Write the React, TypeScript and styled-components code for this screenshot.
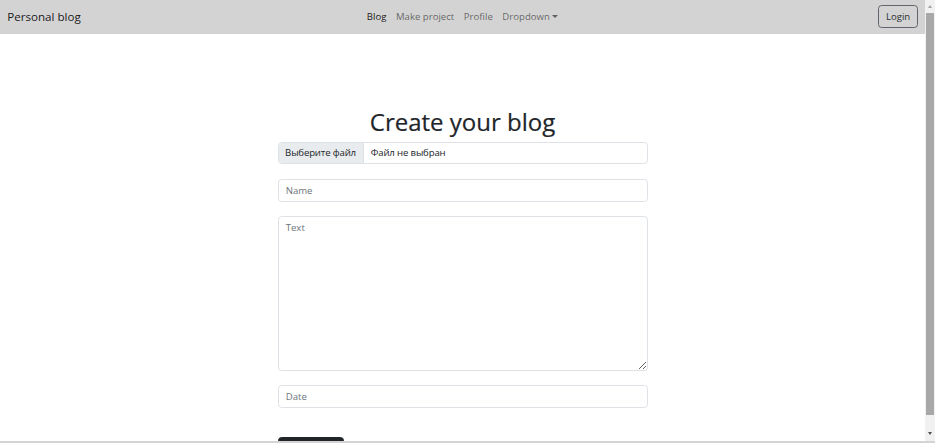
import { createGlobalStyle, styled } from "styled-components";

const GlobalStyle = createGlobalStyle`
	* {
		box-sizing: border-box;
	}

	html,
	body {
		margin: 0;
		height: 100%;
		overflow: hidden;
	}

	body {
		font-family: "Open Sans", "Noto Sans", "DejaVu Sans", sans-serif;
		color: #212529;
		background: #ffffff;
	}
`;

const Viewport = styled.div`
	display: flex;
	height: 100vh;
	border-bottom: 2px solid #d4d4d4;
`;

const Page = styled.div`
	flex: 1;
	min-width: 0;
	overflow: hidden;
`;

const Navbar = styled.nav`
	display: flex;
	align-items: center;
	justify-content: space-between;
	height: 33.6px;
	padding: 0 7.2px;
	background: #d3d3d3;
`;

const Brand = styled.a`
	flex: 1;
	font-size: 11.6px;
	color: rgba(0, 0, 0, 0.9);
	text-decoration: none;
	white-space: nowrap;
`;

const NavList = styled.ul`
	display: flex;
	margin: 0;
	padding: 0;
	list-style: none;
`;

const NavLink = styled.a<{ $active?: boolean }>`
	display: flex;
	align-items: center;
	padding: 4.8px;
	font-size: 9.6px;
	color: ${(p) => (p.$active ? "rgba(0, 0, 0, 0.9)" : "rgba(0, 0, 0, 0.55)")};
	text-decoration: none;
	white-space: nowrap;
`;

const Caret = styled.span`
	display: inline-block;
	margin-left: 2.4px;
	border-top: 3px solid currentColor;
	border-left: 3px solid transparent;
	border-right: 3px solid transparent;
`;

const NavEnd = styled.div`
	flex: 1;
	display: flex;
	justify-content: flex-end;
`;

const LoginButton = styled.button`
	height: 23px;
	padding: 0 6.6px;
	font-family: inherit;
	font-size: 9.6px;
	color: #2b2f33;
	background: transparent;
	border: 1px solid #5f656b;
	border-radius: 3.6px;
`;

const Main = styled.main`
	width: 370px;
	margin: 74.4px auto 0;
`;

const Title = styled.h1`
	margin: 0 0 4.8px;
	font-size: 24px;
	font-weight: 500;
	line-height: 1.2;
	text-align: center;
	-webkit-text-stroke: 0.2px currentColor;
`;

const Form = styled.form`
	display: flex;
	flex-direction: column;
	gap: 14.4px;
`;

const FileField = styled.label`
	display: flex;
	height: 22.8px;
	border: 1px solid #dee2e6;
	border-radius: 3.6px;
	overflow: hidden;
	font-size: 9.6px;
	letter-spacing: -0.15px;
`;

const FileButton = styled.span`
	display: flex;
	align-items: center;
	padding: 0 6.6px;
	background: #e9ecef;
	border-right: 1px solid #dee2e6;
	white-space: nowrap;
`;

const FileName = styled.span`
	display: flex;
	align-items: center;
	padding: 0 7.2px;
`;

const Input = styled.input`
	height: 22.8px;
	padding: 0 7.2px;
	font-family: inherit;
	font-size: 9.6px;
	color: #212529;
	border: 1px solid #dee2e6;
	border-radius: 3.6px;

	&::placeholder {
		color: #6c757d;
	}
`;

const TextArea = styled.textarea`
	height: 155px;
	padding: 3.6px 7.2px;
	font-family: inherit;
	font-size: 9.6px;
	color: #212529;
	border: 1px solid #dee2e6;
	border-radius: 3.6px;
	resize: vertical;

	&::placeholder {
		color: #6c757d;
	}
`;

const SubmitButton = styled.button`
	align-self: flex-start;
	width: 66px;
	height: 22.8px;
	margin-top: 14.4px;
	font-family: inherit;
	font-size: 9.6px;
	color: #ffffff;
	background: #212529;
	border: 1px solid #212529;
	border-radius: 3.6px;
`;

const ScrollTrack = styled.div`
	display: flex;
	flex-direction: column;
	align-items: center;
	width: 10px;
	padding: 3px 0 4px;
	background: #f1f1f1;
`;

const Arrow = styled.span<{ $down?: boolean }>`
	width: 0;
	height: 0;
	margin: 2px 0;
	border-left: 2.5px solid transparent;
	border-right: 2.5px solid transparent;
	${(p) =>
		p.$down
			? "border-top: 3px solid #505050;"
			: "border-bottom: 3px solid #a3a3a3;"}
`;

const Thumb = styled.div`
	flex: 1;
	width: 8px;
	margin: 3px 0 15px;
	background: #a8a8a8;
`;

function App() {
	return (
		<>
			<GlobalStyle />
			<Viewport>
				<Page>
					<Navbar>
						<Brand href="#">Personal blog</Brand>
						<NavList>
							<li>
								<NavLink $active href="#">
									Blog
								</NavLink>
							</li>
							<li>
								<NavLink href="#">Make project</NavLink>
							</li>
							<li>
								<NavLink href="#">Profile</NavLink>
							</li>
							<li>
								<NavLink href="#">
									Dropdown
									<Caret />
								</NavLink>
							</li>
						</NavList>
						<NavEnd>
							<LoginButton>Login</LoginButton>
						</NavEnd>
					</Navbar>
					<Main>
						<Title>Create your blog</Title>
						<Form onSubmit={(e) => e.preventDefault()}>
							<FileField>
								<FileButton>Выберите файл</FileButton>
								<FileName>Файл не выбран</FileName>
							</FileField>
							<Input placeholder="Name" />
							<TextArea placeholder="Text" />
							<Input placeholder="Date" />
							<SubmitButton>Create</SubmitButton>
						</Form>
					</Main>
				</Page>
				<ScrollTrack>
					<Arrow />
					<Thumb />
					<Arrow $down />
				</ScrollTrack>
			</Viewport>
		</>
	);
}

export default App;
